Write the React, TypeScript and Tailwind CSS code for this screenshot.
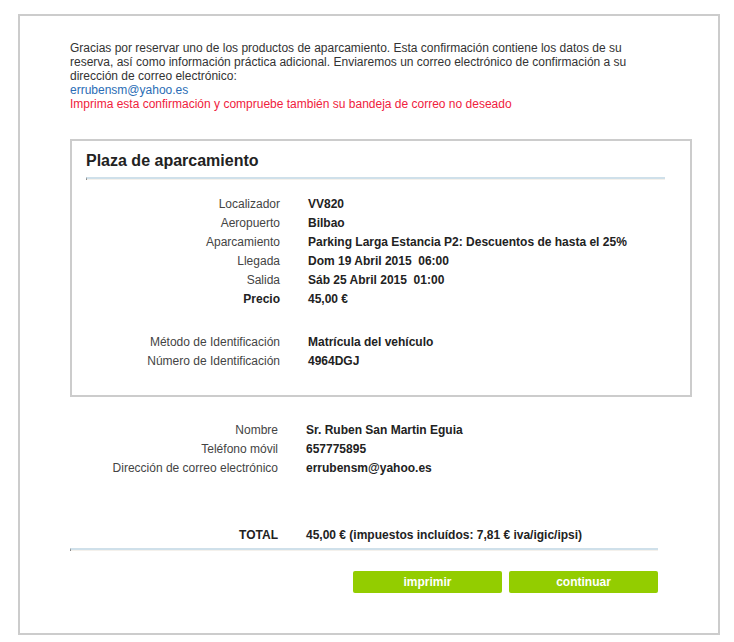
const parking: [string, string, boolean?][] = [
  ["Localizador", "VV820"],
  ["Aeropuerto", "Bilbao"],
  ["Aparcamiento", "Parking Larga Estancia P2: Descuentos de hasta el 25%"],
  ["Llegada", "Dom 19 Abril 2015\u00a0 06:00"],
  ["Salida", "Sáb 25 Abril 2015\u00a0 01:00"],
  ["Precio", "45,00 €", true],
]

const ident: [string, string][] = [
  ["Método de Identificación", "Matrícula del vehículo"],
  ["Número de Identificación", "4964DGJ"],
]

const contact: [string, string][] = [
  ["Nombre", "Sr. Ruben San Martin Eguia"],
  ["Teléfono móvil", "657775895"],
  ["Dirección de correo electrónico", "errubensm@yahoo.es"],
]

function Row({ label, value, strong, labelW }: { label: string; value: string; strong?: boolean; labelW: string }) {
  return (
    <div className="flex leading-[19px]">
      <span className={`${labelW} shrink-0 text-right ${strong ? "font-bold text-[#222]" : "text-[#444]"}`}>{label}</span>
      <span className="pl-[28px] font-bold text-[#222]">{value}</span>
    </div>
  )
}

function Divider({ className }: { className: string }) {
  return (
    <div className={`h-[3px] border-t-2 border-[#cfe0ea] border-l border-l-[#8a8a8a] bg-[#f4f1ec] ${className}`} />
  )
}

export default function App() {
  return (
    <div className="bg-white min-h-[642px] pt-[14px] pl-[18px] text-[12px]" style={{ fontFamily: '"Liberation Sans", Arial, sans-serif' }}>
      <div className="w-[702px] h-[621px] border-2 border-[#cccccc] pl-[50px] pt-[25px]">
        <div className="w-[590px] leading-[14px] text-[#333]">
          <p>
            Gracias por reservar uno de los productos de aparcamiento. Esta confirmación contiene los datos de su reserva, así como información práctica adicional. Enviaremos un correo electrónico de confirmación a su dirección de correo electrónico:
          </p>
          <p className="text-[#2a6db5]">errubensm@yahoo.es</p>
          <p className="text-[#f0213d]">Imprima esta confirmación y compruebe también su bandeja de correo no deseado</p>
        </div>

        <div className="mt-[28px] w-[622px] h-[258px] border-2 border-[#cccccc] pl-[14px] pt-[10px]">
          <h2 className="text-[16px] leading-[19px] font-bold text-[#222]">Plaza de aparcamiento</h2>
          <Divider className="mt-[7px] w-[579px]" />
          <div className="mt-[15px]">
            {parking.map(([l, v, s]) => (
              <Row key={l} label={l} value={v} strong={s} labelW="w-[194px]" />
            ))}
          </div>
          <div className="mt-[24px]">
            {ident.map(([l, v]) => (
              <Row key={l} label={l} value={v} labelW="w-[194px]" />
            ))}
          </div>
        </div>

        <div className="mt-[24px]">
          {contact.map(([l, v]) => (
            <Row key={l} label={l} value={v} labelW="w-[208px]" />
          ))}
        </div>

        <div className="mt-[48px]">
          <Row label="TOTAL" value="45,00 € (impuestos incluídos: 7,81 € iva/igic/ipsi)" strong labelW="w-[208px]" />
        </div>
        <Divider className="mt-[3px] w-[588px]" />

        <div className="mt-[20px] w-[588px] flex justify-end gap-[7px]">
          <button className="w-[149px] h-[22px] rounded-[2px] bg-[#93cd00] text-white font-bold text-[12px] leading-[22px]">imprimir</button>
          <button className="w-[149px] h-[22px] rounded-[2px] bg-[#93cd00] text-white font-bold text-[12px] leading-[20px]">continuar</button>
        </div>
      </div>
    </div>
  )
}
